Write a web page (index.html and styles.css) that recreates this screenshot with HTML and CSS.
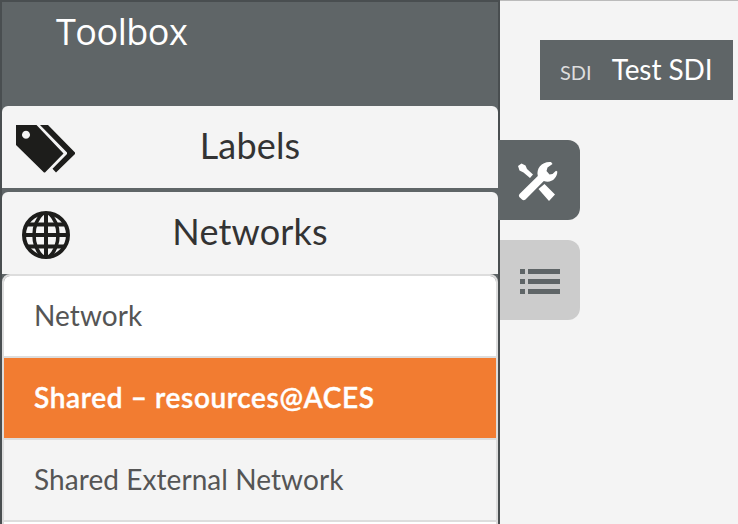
FILE: index.html
```html
<!DOCTYPE html>
<html lang="en">
<head>
<meta charset="utf-8">
<title>Toolbox</title>
<link rel="stylesheet" href="styles.css">
</head>
<body>
<div class="app">
  <aside class="toolbox">
    <h1 class="toolbox-title">Toolbox</h1>
    <section class="panel">
      <svg class="panel-icon" viewBox="0 0 64 64" fill="#1d1d1b">
        <path fill-rule="evenodd" d="M4 10H24.500L51.500 38.500L33 57.500H32L4 30ZM14 15.800a4 4 0 1 0 .01 0Z"/>
        <path d="M28 10H36L63 37.500V39L44 57.500L40.500 53.800L55 39V37.500Z"/>
      </svg>
      <h2 class="panel-title">Labels</h2>
    </section>
    <section class="panel">
      <svg class="panel-icon" viewBox="0 0 64 64" fill="none" stroke="#1d1d1b" stroke-width="4">
        <circle cx="34" cy="34" r="22"/>
        <path d="M34 11V57M11 34H57M15.500 23.500H52.500M15.500 45.500H52.500"/>
        <path stroke-width="3.500" d="M31 12C19 23 19 45 31 56M37 12C49 23 49 45 37 56"/>
      </svg>
      <h2 class="panel-title">Networks</h2>
    </section>
    <ul class="items">
      <li class="item item-first">Network</li>
      <li class="item item-active">Shared – resources@ACES</li>
      <li class="item item-alt">Shared External Network</li>
      <li class="item"></li>
    </ul>
  </aside>
  <nav class="tabs">
    <div class="tab tab-active">
      <svg class="tab-icon" viewBox="0 0 40 40" fill="#fff">
        <path d="M0 6L3.500 3.500L7.500 5.500L9 9L15 14.500L12 18L5.500 12.500L1.500 10.500ZM20.500 29L26.500 24L37 34.500L31 41Z"/>
        <path d="M1.500 34L19.800 16C18 8 24 1.200 33 2L34.500 4L29.500 7.500L28.500 11L31.500 14.500L34.500 14L38 10.800L39.300 11.500C39.500 18 33 23.800 25.800 21L7.500 39.500Q5.500 41 4 39.500L1.300 37Q.3 35.500 1.500 34Z"/>
      </svg>
    </div>
    <div class="tab tab-list">
      <svg class="tab-icon" viewBox="0 0 40 40" fill="#5f6567">
        <path d="M0 9h5v5H0zM8 9h32v5H8zM0 19h5v5H0zM8 19h32v5H8zM0 29h5v5H0zM8 29h32v5H8z"/>
      </svg>
    </div>
  </nav>
  <main class="canvas">
    <div class="crumb"><span class="crumb-type">SDI</span><span class="crumb-name">Test SDI</span></div>
  </main>
</div>
</body>
</html>
```

FILE: styles.css
```css
* { box-sizing: border-box; }
body { margin: 0; overflow: hidden; background: #f4f4f4; font-family: Lato, "Liberation Sans", sans-serif; }
.app { display: flex; width: 738px; height: 524px; overflow: hidden; }
.toolbox { flex: none; width: 500px; height: 560px; border: 2px solid #494e50; background: #5f6567; }
.toolbox-title { height: 104px; margin: 0; padding-left: 54px; font: 400 36px/60px "Open Sans", sans-serif; letter-spacing: -.5px; color: #fff; }
.panel { display: grid; grid-template-columns: 80px 1fr 80px; align-items: center; height: 82px; margin-bottom: 4px; padding: 0 10px; border-radius: 6px 6px 0 0; background: #f4f4f4; }
.panel-icon { width: 64px; height: 64px; }
.panel-title { margin: 0; text-align: center; font-size: 36px; font-weight: 400; line-height: 78px; padding-bottom: 4px; letter-spacing: .15px; color: #333; }
.items { margin: -4px 0 0; padding: 0; list-style: none; border: 2px solid #ddd; border-radius: 8px 8px 0 0; overflow: hidden; }
.item { height: 82px; padding-left: 30px; border-bottom: 2px solid #ddd; background: #fff; font-size: 28px; line-height: 79px; letter-spacing: .07px; color: #555; }
.item-active { background: #f27c31; color: #fff; font-weight: 600; letter-spacing: .62px; -webkit-text-stroke: .4px #fff; }
.item-alt { background: #f4f4f4; }
.tabs { flex: none; width: 80px; padding-top: 139px; border-top: 1px solid #bbb; }
.tab { display: flex; align-items: center; justify-content: center; height: 80px; margin-bottom: 20px; border-radius: 0 12px 12px 0; }
.tab-active { margin-left: -2px; padding-right: 2px; background: #5f6567; }
.tab-list { background: #ccc; }
.tab-icon { width: 40px; height: 40px; overflow: visible; }
.canvas { flex: 1; margin-left: -40px; padding-top: 39px; border-top: 1px solid #bbb; }
.crumb { display: flex; align-items: baseline; gap: 20px; width: 193px; height: 60px; padding-left: 20px; background: #5f6567; line-height: 59px; white-space: nowrap; }
.crumb-type { font-size: 20px; color: #ddd; }
.crumb-name { font-size: 28px; letter-spacing: -.1px; color: #fff; }
```
